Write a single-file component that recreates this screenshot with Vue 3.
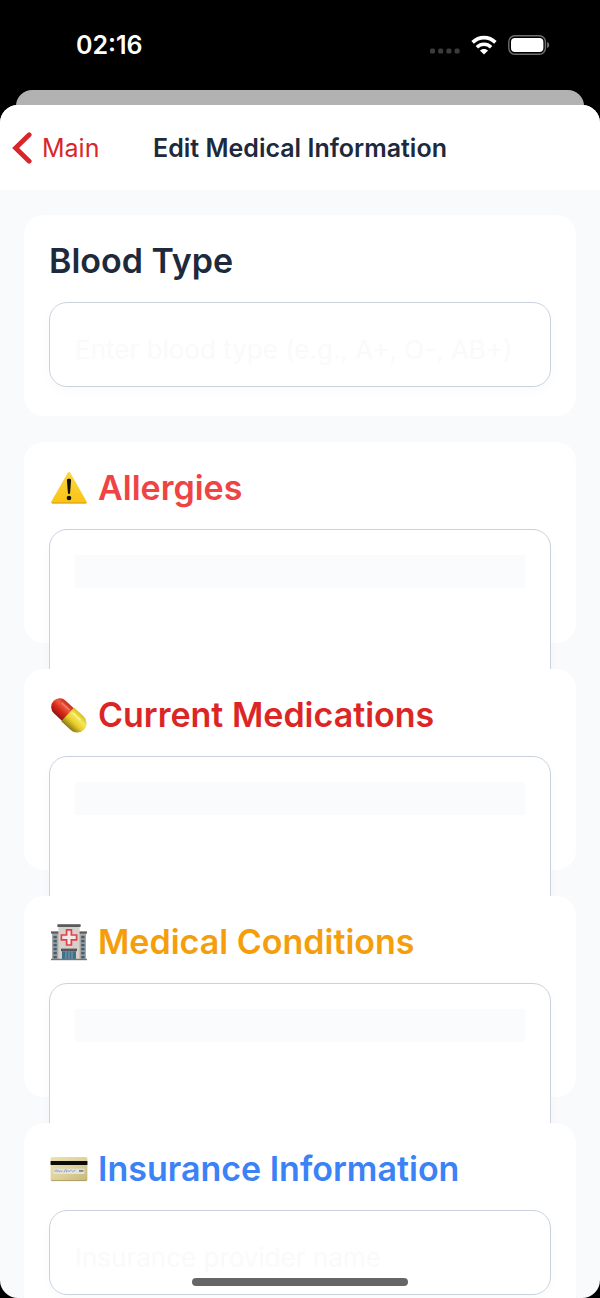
<template>
  <div class="screen">
    <!-- Status bar -->
    <header class="status-bar">
      <span class="status-time">02:16</span>
      <div class="status-icons">
        <svg class="dots" viewBox="0 0 30 6" aria-hidden="true">
          <rect v-for="n in 4" :key="n" :x="(n - 1) * 8.2" y="0.5" width="5" height="5" rx="1.6" fill="#3b3b3b" />
        </svg>
        <svg class="wifi" viewBox="0 0 26 20" aria-hidden="true">
          <g fill="none" stroke="#fff" stroke-width="3.6">
            <path d="M1.6 7.4C8.2 1 17.8 1 24.4 7.4" />
            <path d="M5.9 12.2C10 8.3 16 8.3 20.1 12.2" />
          </g>
          <path d="M13 19.6L8.9 15.6C11.1 13.5 14.9 13.5 17.1 15.6Z" fill="#fff" />
        </svg>
        <svg class="battery" viewBox="0 0 42 20" aria-hidden="true">
          <rect x="0.8" y="0.8" width="36.6" height="18.4" rx="6" fill="none" stroke="#6e6e6e" stroke-width="1.4" />
          <rect x="3" y="3" width="32.4" height="14" rx="4" fill="#fff" />
          <path d="M39.2 7C41.8 7.8 41.8 12.2 39.2 13Z" fill="#7a7a7a" />
        </svg>
      </div>
    </header>

    <!-- Edge of the page behind the sheet -->
    <div class="back-sheet"></div>

    <main class="sheet">
      <nav class="nav-bar">
        <a href="#" class="nav-back" @click.prevent>
          <svg viewBox="0 0 20 32" aria-hidden="true">
            <path d="M17.2 2.8L3.6 16L17.2 29.2" fill="none" stroke="currentColor" stroke-width="4.8" stroke-linecap="round" stroke-linejoin="miter" />
          </svg>
          <span>Main</span>
        </a>
        <h1 class="nav-title">Edit Medical Information</h1>
      </nav>

      <form class="cards" @submit.prevent>
        <section v-for="field in fields" :key="field.id" class="card">
          <h2 class="card-title">
            <label :for="field.id" :class="field.tone">
              <svg v-if="field.icon === 'warning'" class="emoji" viewBox="0 0 38 38" aria-hidden="true">
                <defs>
                  <linearGradient id="warn" x1="0" y1="0" x2="0" y2="1">
                    <stop offset="0" stop-color="#f8d648" />
                    <stop offset="1" stop-color="#fbc40f" />
                  </linearGradient>
                </defs>
                <path d="M17.6 4C18.3 2.7 19.7 2.7 20.4 4L36.6 32.4C37.2 33.6 36.6 34.4 35.4 34.4H2.6C1.4 34.4 0.8 33.6 1.4 32.4Z" fill="url(#warn)" />
                <path d="M1.6 33.2C1.9 34.1 2.2 34.4 2.8 34.4H35.2C35.9 34.4 36.3 34.1 36.5 33.2Z" fill="#dfa51a" />
                <path d="M16.9 11.2C16.8 9.4 21.2 9.4 21.1 11.2L20.1 23.8C20 25.4 18 25.4 17.9 23.8Z" fill="#141005" />
                <circle cx="19" cy="29" r="2.3" fill="#141005" />
              </svg>

              <svg v-else-if="field.icon === 'pill'" class="emoji" viewBox="0 0 38 38" aria-hidden="true">
                <defs>
                  <linearGradient id="pill-red" x1="0" y1="0" x2="0" y2="1">
                    <stop offset="0" stop-color="#c8281a" />
                    <stop offset="0.3" stop-color="#ee5a3e" />
                    <stop offset="0.6" stop-color="#d92b1b" />
                    <stop offset="1" stop-color="#8f150d" />
                  </linearGradient>
                  <linearGradient id="pill-yellow" x1="0" y1="0" x2="0" y2="1">
                    <stop offset="0" stop-color="#d9be22" />
                    <stop offset="0.3" stop-color="#f6e75a" />
                    <stop offset="0.62" stop-color="#e5cc2a" />
                    <stop offset="1" stop-color="#8b7410" />
                  </linearGradient>
                </defs>
                <g transform="rotate(43 18.4 19)">
                  <path d="M19 10.4H5.6A8.6 8.6 0 0 0 5.6 27.6H19Z" transform="translate(1 0)" fill="url(#pill-red)" />
                  <path d="M17.4 9.6H30.4A9.4 9.4 0 0 1 30.4 28.4H17.4Z" fill="url(#pill-yellow)" />
                  <path d="M6 14.6H15" stroke="#f3806a" stroke-width="1.4" stroke-linecap="round" />
                  <path d="M20.6 14.4H30" stroke="#fbf28e" stroke-width="1.6" stroke-linecap="round" />
                </g>
              </svg>

              <svg v-else-if="field.icon === 'hospital'" class="emoji" viewBox="0 0 38 38" aria-hidden="true">
                <rect x="2" y="9.6" width="34" height="27" fill="#aaa5a0" />
                <rect x="1" y="8.4" width="8" height="2.2" fill="#5c5a5b" />
                <rect x="29" y="8.4" width="8" height="2.2" fill="#5c5a5b" />
                <rect x="8.4" y="3" width="21.2" height="33.6" fill="#d6d1cb" />
                <rect x="7.4" y="1.2" width="23.2" height="2.8" fill="#5c5a5b" />
                <g fill="#3d6076">
                  <template v-for="row in 6" :key="row">
                    <rect x="3.4" :y="8.8 + row * 4" width="3.4" height="2.6" />
                    <rect x="31.2" :y="8.8 + row * 4" width="3.4" height="2.6" />
                  </template>
                </g>
                <path d="M16.6 6.8H21.4V12H26.6V16.8H21.4V22H16.6V16.8H11.4V12H16.6Z" fill="#f3e9e6" stroke="#e0424c" stroke-width="1.7" />
                <rect x="11" y="25.6" width="16" height="2.6" fill="#575557" />
                <rect x="12" y="28.2" width="14" height="8.4" fill="#40718c" />
                <path d="M16 28.2V36.6M19 28.2V36.6M22 28.2V36.6" stroke="#94aab5" stroke-width="0.8" />
                <rect x="1" y="35.8" width="36" height="1.4" fill="#767371" />
              </svg>

              <svg v-else-if="field.icon === 'card'" class="emoji" viewBox="0 0 38 38" aria-hidden="true">
                <defs>
                  <linearGradient id="credit" x1="0" y1="0" x2="1" y2="1">
                    <stop offset="0" stop-color="#ece0ae" />
                    <stop offset="0.5" stop-color="#dfd39b" />
                    <stop offset="1" stop-color="#c5b778" />
                  </linearGradient>
                </defs>
                <rect x="0.6" y="7" width="36.8" height="24" rx="1.6" fill="url(#credit)" />
                <rect x="0.6" y="11" width="36.8" height="4" fill="#0c0b08" />
                <rect x="3.4" y="18.6" width="31" height="5.4" fill="#e2e2de" />
                <path d="M4.6 22C6 18.8 7 19.4 6.8 21.6C8.6 19.8 9.4 20.6 9.2 22C10.6 20.4 12 20.6 12.4 22M14 22.4C15.4 18.4 16.6 18.8 16.4 22C18 20 19 20.8 19.4 21.8C20.8 19 21.8 20.6 22.6 21.6L25.4 20.2" fill="none" stroke="#8c9cc0" stroke-width="0.9" />
                <rect x="29" y="20" width="4.4" height="1.8" fill="#85857f" />
                <path d="M1.4 30.6H36.6" stroke="#a89b64" stroke-width="0.9" />
              </svg>

              <span>{{ field.label }}</span>
            </label>
          </h2>

          <div v-if="field.multiline" class="field field-area">
            <textarea :id="field.id" v-model="form[field.id]" rows="1"></textarea>
          </div>
          <div v-else class="field">
            <input :id="field.id" v-model="form[field.id]" type="text" :placeholder="field.placeholder" />
          </div>
        </section>
      </form>
    </main>

    <div class="home-indicator"></div>
  </div>
</template>

<script setup>
import { reactive } from 'vue';

const form = reactive({
  bloodType: '',
  allergies: '',
  medications: '',
  conditions: '',
  insurance: '',
});

const fields = [
  { id: 'bloodType', label: 'Blood Type', tone: 'tone-dark', placeholder: 'Enter blood type (e.g., A+, O-, AB+)' },
  { id: 'allergies', label: 'Allergies', tone: 'tone-coral', icon: 'warning', multiline: true },
  { id: 'medications', label: 'Current Medications', tone: 'tone-red', icon: 'pill', multiline: true },
  { id: 'conditions', label: 'Medical Conditions', tone: 'tone-amber', icon: 'hospital', multiline: true },
  { id: 'insurance', label: 'Insurance Information', tone: 'tone-blue', icon: 'card', placeholder: 'Insurance provider name' },
];
</script>

<style>
body {
  margin: 0;
  background: #000;
}
</style>

<style scoped>
.screen {
  position: relative;
  display: flex;
  flex-direction: column;
  height: 100vh;
  background: #000;
  font-family: Inter, "Liberation Sans", sans-serif;
  overflow: hidden;
}

/* Status bar */
.status-bar {
  display: flex;
  align-items: center;
  justify-content: space-between;
  box-sizing: border-box;
  height: 90px;
  flex-shrink: 0;
  padding: 0 50px 0 76px;
  color: #fff;
}

.status-time {
  font-size: 25px;
  font-weight: 600;
}

.status-icons {
  display: flex;
  align-items: center;
  gap: 11px;
}

.dots {
  width: 30px;
  height: 6px;
  margin-top: 12px;
}

.wifi {
  width: 26px;
  height: 20px;
}

.battery {
  width: 42px;
  height: 20px;
}

/* Sheets */
.back-sheet {
  height: 40px;
  flex-shrink: 0;
  margin: 0 16px -25px;
  border-radius: 16px 16px 0 0;
  background: #b2b2b2;
}

.sheet {
  position: relative;
  display: flex;
  flex-direction: column;
  flex: 1;
  min-height: 0;
  border-radius: 18px;
  background: #f9fafc;
  overflow: hidden;
}

.nav-bar {
  display: grid;
  grid-template-columns: 1fr auto 1fr;
  align-items: center;
  height: 85px;
  flex-shrink: 0;
  padding: 0 12px;
  background: #fff;
}

.nav-back {
  display: flex;
  align-items: center;
  gap: 10px;
  color: #d8262b;
  font-size: 25px;
  text-decoration: none;
}

.nav-back svg {
  width: 20px;
  height: 32px;
}

.nav-title {
  margin: 0;
  color: #1e293b;
  font-size: 25px;
  font-weight: 600;
}

/* Cards: fixed rows, long fields run on under the next card */
.cards {
  display: grid;
  grid-auto-rows: 201px;
  gap: 26px;
  flex: 1;
  min-height: 0;
  padding: 25px 24px;
  overflow-y: auto;
  scrollbar-width: none;
}

.card {
  position: relative;
  box-sizing: border-box;
  padding: 25px;
  border-radius: 20px;
  background: #fff;
}

.card-title {
  margin: 0 0 20px;
  font-size: 34px;
  font-weight: 600;
  line-height: 42px;
}

.card-title label {
  display: flex;
  align-items: center;
  gap: 9px;
}

.emoji {
  width: 40px;
  height: 38px;
  flex-shrink: 0;
}

.tone-dark {
  color: #1e293b;
}

.tone-coral {
  color: #ef4444;
}

.tone-red {
  color: #dc2626;
}

.tone-amber {
  color: #f59e0b;
}

.tone-blue {
  color: #3b82f6;
}

/* Fields */
.field {
  box-sizing: border-box;
  height: 85px;
  padding: 30px 25px 20px;
  border: 1px solid #cbd2de;
  border-radius: 18px;
  background: #fff;
  box-shadow: 0 4px 8px rgba(148, 163, 184, 0.06);
}

.field-area {
  height: 200px;
  padding: 25px;
}

.field input,
.field textarea {
  display: block;
  box-sizing: border-box;
  width: 100%;
  height: 33px;
  padding: 0;
  border: none;
  outline: none;
  background: transparent;
  color: #1e293b;
  font-family: inherit;
  font-size: 26px;
  line-height: 33px;
  resize: none;
}

.field textarea {
  background: #fafbfd;
}

.field input::placeholder {
  color: #fafafb;
  opacity: 1;
}

.home-indicator {
  position: absolute;
  bottom: 12px;
  left: 50%;
  width: 36%;
  height: 8px;
  border-radius: 4px;
  background: #666;
  transform: translateX(-50%);
}
</style>
